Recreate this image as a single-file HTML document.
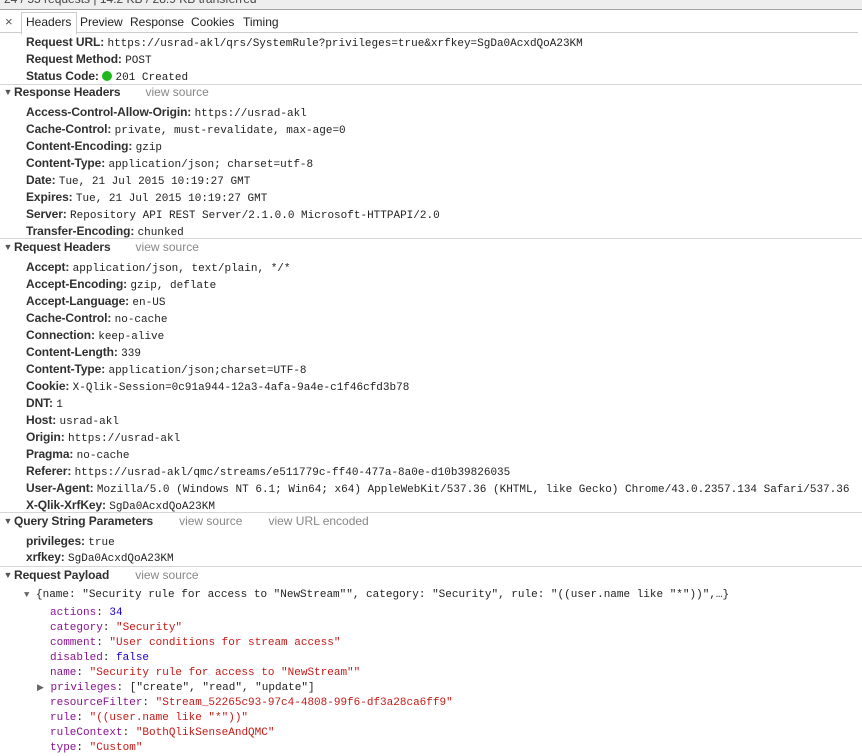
<!DOCTYPE html>
<html><head><meta charset="utf-8"><style>
body{margin:0;width:862px;height:755px;overflow:hidden;background:#fff;position:relative;font-family:"Liberation Sans",sans-serif;font-size:12px;color:#222}
.a{position:absolute;white-space:nowrap;line-height:16px;height:16px}
b{font-weight:bold;color:#303030;letter-spacing:-0.1px}
.m{font-family:"Liberation Mono",monospace;font-size:11px;color:#222}
.h{left:0}
.h .t{font-size:9px;color:#555;display:inline-block;width:12px;text-align:center;position:relative;top:-1px}
.vs{color:#888;font-weight:normal}
.ln{position:absolute;left:0;width:862px;height:1px;background:#d6d6d6}
.k{color:#881391}.s{color:#c41a16}.n{color:#1c00cf}
</style></head><body>
<div style="position:absolute;left:0;top:0;width:862px;height:9px;background:#eee;border-bottom:1px solid #a3a3a3;overflow:hidden"><span style="position:absolute;left:4px;top:-8px;color:#444;font-size:12px">24 / 55 requests | 14.2 KB / 28.9 KB transferred</span></div>
<div style="position:absolute;left:0;top:10px;width:858px;height:22px;border-bottom:1px solid #ccc"></div>
<div class="a" style="left:5px;top:14px;color:#555;font-size:13px">×</div>
<div style="position:absolute;left:21px;top:12px;width:54px;height:21px;border:1px solid #ccc;border-bottom:1px solid #fff;background:#fff"></div>
<div class="a" style="left:26px;top:14px">Headers</div>
<div class="a" style="left:80px;top:14px">Preview</div>
<div class="a" style="left:130px;top:14px">Response</div>
<div class="a" style="left:191px;top:14px">Cookies</div>
<div class="a" style="left:243px;top:14px">Timing</div>

<div class="a" style="left:26px;top:34px"><b>Request URL:</b> <span class="m">https://usrad-akl/qrs/SystemRule?privileges=true&amp;xrfkey=SgDa0AcxdQoA23KM</span></div>
<div class="a" style="left:26px;top:51px"><b>Request Method:</b> <span class="m">POST</span></div>
<div class="a" style="left:26px;top:68px"><b>Status Code:</b> <span style="display:inline-block;width:10px;height:10px;border-radius:50%;background:#1fb81f;vertical-align:-1px"></span> <span class="m">201 Created</span></div>

<div class="ln" style="top:84px"></div>
<div class="a h" style="left:2px;top:84px"><span class="t">▼</span><b>Response Headers</b><span class="vs" style="margin-left:25px">view source</span></div>
<div class="a" style="left:26px;top:104px"><b>Access-Control-Allow-Origin:</b> <span class="m">https://usrad-akl</span></div>
<div class="a" style="left:26px;top:121px"><b>Cache-Control:</b> <span class="m">private, must-revalidate, max-age=0</span></div>
<div class="a" style="left:26px;top:138px"><b>Content-Encoding:</b> <span class="m">gzip</span></div>
<div class="a" style="left:26px;top:155px"><b>Content-Type:</b> <span class="m">application/json; charset=utf-8</span></div>
<div class="a" style="left:26px;top:172px"><b>Date:</b> <span class="m">Tue, 21 Jul 2015 10:19:27 GMT</span></div>
<div class="a" style="left:26px;top:189px"><b>Expires:</b> <span class="m">Tue, 21 Jul 2015 10:19:27 GMT</span></div>
<div class="a" style="left:26px;top:206px"><b>Server:</b> <span class="m">Repository API REST Server/2.1.0.0 Microsoft-HTTPAPI/2.0</span></div>
<div class="a" style="left:26px;top:223px"><b>Transfer-Encoding:</b> <span class="m">chunked</span></div>

<div class="ln" style="top:238px"></div>
<div class="a h" style="left:2px;top:239px"><span class="t">▼</span><b>Request Headers</b><span class="vs" style="margin-left:25px">view source</span></div>
<div class="a" style="left:26px;top:259px"><b>Accept:</b> <span class="m">application/json, text/plain, */*</span></div>
<div class="a" style="left:26px;top:276px"><b>Accept-Encoding:</b> <span class="m">gzip, deflate</span></div>
<div class="a" style="left:26px;top:293px"><b>Accept-Language:</b> <span class="m">en-US</span></div>
<div class="a" style="left:26px;top:310px"><b>Cache-Control:</b> <span class="m">no-cache</span></div>
<div class="a" style="left:26px;top:327px"><b>Connection:</b> <span class="m">keep-alive</span></div>
<div class="a" style="left:26px;top:344px"><b>Content-Length:</b> <span class="m">339</span></div>
<div class="a" style="left:26px;top:361px"><b>Content-Type:</b> <span class="m">application/json;charset=UTF-8</span></div>
<div class="a" style="left:26px;top:378px"><b>Cookie:</b> <span class="m">X-Qlik-Session=0c91a944-12a3-4afa-9a4e-c1f46cfd3b78</span></div>
<div class="a" style="left:26px;top:395px"><b>DNT:</b> <span class="m">1</span></div>
<div class="a" style="left:26px;top:412px"><b>Host:</b> <span class="m">usrad-akl</span></div>
<div class="a" style="left:26px;top:429px"><b>Origin:</b> <span class="m">https://usrad-akl</span></div>
<div class="a" style="left:26px;top:446px"><b>Pragma:</b> <span class="m">no-cache</span></div>
<div class="a" style="left:26px;top:463px"><b>Referer:</b> <span class="m">https://usrad-akl/qmc/streams/e511779c-ff40-477a-8a0e-d10b39826035</span></div>
<div class="a" style="left:26px;top:480px"><b>User-Agent:</b> <span class="m">Mozilla/5.0 (Windows NT 6.1; Win64; x64) AppleWebKit/537.36 (KHTML, like Gecko) Chrome/43.0.2357.134 Safari/537.36</span></div>
<div class="a" style="left:26px;top:497px"><b>X-Qlik-XrfKey:</b> <span class="m">SgDa0AcxdQoA23KM</span></div>

<div class="ln" style="top:512px"></div>
<div class="a h" style="left:2px;top:513px"><span class="t">▼</span><b>Query String Parameters</b><span class="vs" style="margin-left:26px">view source</span><span class="vs" style="margin-left:26px">view URL encoded</span></div>
<div class="a" style="left:26px;top:533px"><b>privileges:</b> <span class="m">true</span></div>
<div class="a" style="left:26px;top:549px"><b>xrfkey:</b> <span class="m">SgDa0AcxdQoA23KM</span></div>

<div class="ln" style="top:566px"></div>
<div class="a h" style="left:2px;top:567px"><span class="t">▼</span><b>Request Payload</b><span class="vs" style="margin-left:26px">view source</span></div>
<div class="a m" style="left:24px;top:587px"><span style="font-size:9px;color:#666">▼</span> {name: "Security rule for access to "NewStream"", category: "Security", rule: "((user.name like "*"))",…}</div>
<div class="a m" style="left:50px;top:605px"><span class="k">actions</span>: <span class="n">34</span></div>
<div class="a m" style="left:50px;top:620px"><span class="k">category</span>: <span class="s">"Security"</span></div>
<div class="a m" style="left:50px;top:635px"><span class="k">comment</span>: <span class="s">"User conditions for stream access"</span></div>
<div class="a m" style="left:50px;top:650px"><span class="k">disabled</span>: <span class="n">false</span></div>
<div class="a m" style="left:50px;top:665px"><span class="k">name</span>: <span class="s">"Security rule for access to "NewStream""</span></div>
<div class="a m" style="left:37px;top:680px"><span style="font-size:9px;color:#666">▶</span> <span class="k">privileges</span>: ["create", "read", "update"]</div>
<div class="a m" style="left:50px;top:695px"><span class="k">resourceFilter</span>: <span class="s">"Stream_52265c93-97c4-4808-99f6-df3a28ca6ff9"</span></div>
<div class="a m" style="left:50px;top:710px"><span class="k">rule</span>: <span class="s">"((user.name like "*"))"</span></div>
<div class="a m" style="left:50px;top:725px"><span class="k">ruleContext</span>: <span class="s">"BothQlikSenseAndQMC"</span></div>
<div class="a m" style="left:50px;top:740px"><span class="k">type</span>: <span class="s">"Custom"</span></div>
</body></html>
